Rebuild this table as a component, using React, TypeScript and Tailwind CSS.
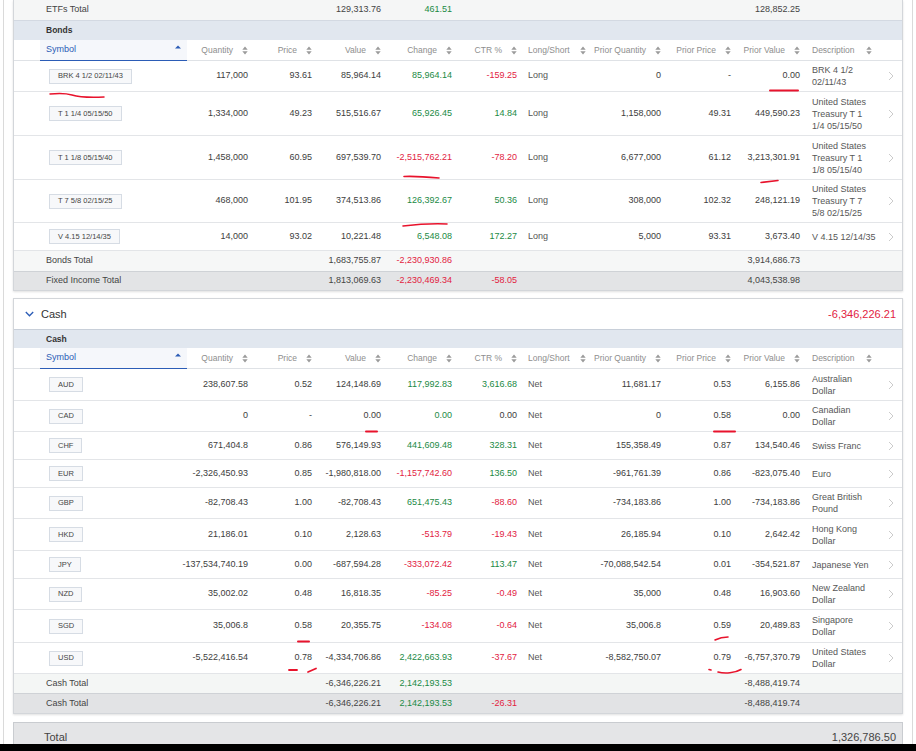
import React from "react";

type V = string | [string, "g" | "r"] | undefined;

const GRID =
  "grid grid-cols-[26px_147px_65px_64px_69px_71px_65px_70px_74px_70px_69px_76px_22px]";

type Row = {
  sym: string;
  q: V;
  p: V;
  v: V;
  c: V;
  ctr: V;
  ls: string;
  pq: V;
  pp: V;
  pv: V;
  desc: string[];
  h: string;
};

const bonds: Row[] = [
  { sym: "BRK 4 1/2 02/11/43", q: "117,000", p: "93.61", v: "85,964.14", c: ["85,964.14", "g"], ctr: ["-159.25", "r"], ls: "Long", pq: "0", pp: "-", pv: "0.00", desc: ["BRK 4 1/2", "02/11/43"], h: "h-[31px]" },
  { sym: "T 1 1/4 05/15/50", q: "1,334,000", p: "49.23", v: "515,516.67", c: ["65,926.45", "g"], ctr: ["14.84", "g"], ls: "Long", pq: "1,158,000", pp: "49.31", pv: "449,590.23", desc: ["United States", "Treasury T 1", "1/4 05/15/50"], h: "h-[44px]" },
  { sym: "T 1 1/8 05/15/40", q: "1,458,000", p: "60.95", v: "697,539.70", c: ["-2,515,762.21", "r"], ctr: ["-78.20", "r"], ls: "Long", pq: "6,677,000", pp: "61.12", pv: "3,213,301.91", desc: ["United States", "Treasury T 1", "1/8 05/15/40"], h: "h-[44px]" },
  { sym: "T 7 5/8 02/15/25", q: "468,000", p: "101.95", v: "374,513.86", c: ["126,392.67", "g"], ctr: ["50.36", "g"], ls: "Long", pq: "308,000", pp: "102.32", pv: "248,121.19", desc: ["United States", "Treasury T 7", "5/8 02/15/25"], h: "h-[43px]" },
  { sym: "V 4.15 12/14/35", q: "14,000", p: "93.02", v: "10,221.48", c: ["6,548.08", "g"], ctr: ["172.27", "g"], ls: "Long", pq: "5,000", pp: "93.31", pv: "3,673.40", desc: ["V 4.15 12/14/35"], h: "h-[28px]" },
];

const cash: Row[] = [
  { sym: "AUD", q: "238,607.58", p: "0.52", v: "124,148.69", c: ["117,992.83", "g"], ctr: ["3,616.68", "g"], ls: "Net", pq: "11,681.17", pp: "0.53", pv: "6,155.86", desc: ["Australian", "Dollar"], h: "h-[32px]" },
  { sym: "CAD", q: "0", p: "-", v: "0.00", c: ["0.00", "g"], ctr: "0.00", ls: "Net", pq: "0", pp: "0.58", pv: "0.00", desc: ["Canadian", "Dollar"], h: "h-[31px]" },
  { sym: "CHF", q: "671,404.8", p: "0.86", v: "576,149.93", c: ["441,609.48", "g"], ctr: ["328.31", "g"], ls: "Net", pq: "155,358.49", pp: "0.87", pv: "134,540.46", desc: ["Swiss Franc"], h: "h-[28px]" },
  { sym: "EUR", q: "-2,326,450.93", p: "0.85", v: "-1,980,818.00", c: ["-1,157,742.60", "r"], ctr: ["136.50", "g"], ls: "Net", pq: "-961,761.39", pp: "0.86", pv: "-823,075.40", desc: ["Euro"], h: "h-[28px]" },
  { sym: "GBP", q: "-82,708.43", p: "1.00", v: "-82,708.43", c: ["651,475.43", "g"], ctr: ["-88.60", "r"], ls: "Net", pq: "-734,183.86", pp: "1.00", pv: "-734,183.86", desc: ["Great British", "Pound"], h: "h-[31px]" },
  { sym: "HKD", q: "21,186.01", p: "0.10", v: "2,128.63", c: ["-513.79", "r"], ctr: ["-19.43", "r"], ls: "Net", pq: "26,185.94", pp: "0.10", pv: "2,642.42", desc: ["Hong Kong", "Dollar"], h: "h-[32px]" },
  { sym: "JPY", q: "-137,534,740.19", p: "0.00", v: "-687,594.28", c: ["-333,072.42", "r"], ctr: ["113.47", "g"], ls: "Net", pq: "-70,088,542.54", pp: "0.01", pv: "-354,521.87", desc: ["Japanese Yen"], h: "h-[28px]" },
  { sym: "NZD", q: "35,002.02", p: "0.48", v: "16,818.35", c: ["-85.25", "r"], ctr: ["-0.49", "r"], ls: "Net", pq: "35,000", pp: "0.48", pv: "16,903.60", desc: ["New Zealand", "Dollar"], h: "h-[31px]" },
  { sym: "SGD", q: "35,006.8", p: "0.58", v: "20,355.75", c: ["-134.08", "r"], ctr: ["-0.64", "r"], ls: "Net", pq: "35,006.8", pp: "0.59", pv: "20,489.83", desc: ["Singapore", "Dollar"], h: "h-[33px]" },
  { sym: "USD", q: "-5,522,416.54", p: "0.78", v: "-4,334,706.86", c: ["2,422,663.93", "g"], ctr: ["-37.67", "r"], ls: "Net", pq: "-8,582,750.07", pp: "0.79", pv: "-6,757,370.79", desc: ["United States", "Dollar"], h: "h-[31px]" },
];

function Num({ v }: { v: V }) {
  if (v === undefined) return <div />;
  const text = typeof v === "string" ? v : v[0];
  const tone = typeof v === "string" ? undefined : v[1];
  const color =
    tone === "g" ? "text-[#1b8a45]" : tone === "r" ? "text-[#e2223f]" : "";
  return (
    <div className={`flex justify-end whitespace-nowrap pr-1 ${color}`}>
      {text}
    </div>
  );
}

function Sort() {
  return (
    <svg width="6" height="9" viewBox="0 0 6 9" className="shrink-0">
      <path d="M0.3 3.8 L3 0.6 L5.7 3.8 Z" fill="#9b9b9b" />
      <path d="M0.3 5.2 L3 8.4 L5.7 5.2 Z" fill="#9b9b9b" />
    </svg>
  );
}

function Chevron() {
  return (
    <svg width="6" height="10" viewBox="0 0 6 10">
      <path d="M1 1 L5 5 L1 9" fill="none" stroke="#cbcbcb" strokeWidth="1" />
    </svg>
  );
}

function HeaderRow() {
  const n = (t: string) => (
    <div className="flex items-center justify-end gap-[9px] whitespace-nowrap pr-1">
      {t}
      <Sort />
    </div>
  );
  return (
    <div
      className={`${GRID} h-[21px] items-center border-b border-[#dfe2e6] bg-white text-[8.5px] text-[#8e8e8e]`}
    >
      <div />
      <div className="relative -mb-px flex h-[21px] items-center border-b border-[#2b5cb6] bg-[#f5f7fb] pl-[6px] text-[9px] text-[#2b5cb6]">
        Symbol
        <svg
          width="6"
          height="4"
          viewBox="0 0 6 4"
          className="absolute right-[6px] top-[5px]"
        >
          <path d="M0 3.6 L3 0.4 L6 3.6 Z" fill="#2b5cb6" />
        </svg>
      </div>
      {n("Quantity")}
      {n("Price")}
      {n("Value")}
      {n("Change")}
      {n("CTR %")}
      <div className="flex items-center gap-[10px] whitespace-nowrap pl-[7px]">
        Long/Short
        <Sort />
      </div>
      {n("Prior Quantity")}
      {n("Prior Price")}
      {n("Prior Value")}
      <div className="flex items-center gap-[11px] whitespace-nowrap pl-2">
        Description
        <Sort />
      </div>
      <div />
    </div>
  );
}

function DataRow({ r }: { r: Row }) {
  return (
    <div
      className={`${GRID} ${r.h} items-center border-b border-[#e3e5e8] bg-white text-[9px] text-[#3d3d3d]`}
    >
      <div />
      <div className="pl-[9px]">
        <span className="inline-flex h-[15px] items-center whitespace-nowrap border border-[#d6dce4] bg-[#f7f8fa] px-2 text-[7.5px] text-[#444]">
          {r.sym}
        </span>
      </div>
      <Num v={r.q} />
      <Num v={r.p} />
      <Num v={r.v} />
      <Num v={r.c} />
      <Num v={r.ctr} />
      <div className="pl-[7px] text-[#555]">{r.ls}</div>
      <Num v={r.pq} />
      <Num v={r.pp} />
      <Num v={r.pv} />
      <div className="whitespace-nowrap pl-2 leading-[12px] text-[#575757]">
        {r.desc.map((l, i) => (
          <div key={i}>{l}</div>
        ))}
      </div>
      <div className="flex justify-center">
        <Chevron />
      </div>
    </div>
  );
}

function TotalRow({
  label,
  v,
  c,
  ctr,
  pv,
  cls,
}: {
  label: string;
  v?: V;
  c?: V;
  ctr?: V;
  pv?: V;
  cls: string;
}) {
  return (
    <div className={`${GRID} ${cls} items-center text-[9px] text-[#444]`}>
      <div />
      <div className="whitespace-nowrap pl-[6px]">{label}</div>
      <div />
      <div />
      <Num v={v} />
      <Num v={c} />
      <Num v={ctr} />
      <div />
      <div />
      <div />
      <Num v={pv} />
      <div />
      <div />
    </div>
  );
}

function GroupHeader({ label, cls }: { label: string; cls: string }) {
  return (
    <div
      className={`flex items-center border-t bg-[#e1e7ef] pl-[32px] text-[8.5px] font-semibold text-[#333] ${cls}`}
    >
      {label}
    </div>
  );
}

export default function App() {
  return (
    <div className="relative h-[751px] w-[916px] overflow-hidden bg-white font-['Liberation_Sans',Arial,sans-serif]">
      <div className="ml-[3px] flex h-[744px] w-[910px] flex-col overflow-hidden border-x border-[#dadada] px-[9px]">
        {/* Fixed income panel (continued) */}
        <div className="border-x border-b border-[#d3d6da] bg-white shadow-[0_1px_2px_rgba(0,0,0,0.12)]">
          <TotalRow
            label="ETFs Total"
            v="129,313.76"
            c={["461.51", "g"]}
            pv="128,852.25"
            cls="h-[20px] bg-[#f5f6f6]"
          />
          <GroupHeader label="Bonds" cls="h-[20px] border-[#d3d9e2]" />
          <HeaderRow />
          {bonds.map((r) => (
            <DataRow key={r.sym} r={r} />
          ))}
          <TotalRow
            label="Bonds Total"
            v="1,683,755.87"
            c={["-2,230,930.86", "r"]}
            pv="3,914,686.73"
            cls="h-[20px] bg-[#f6f7f7]"
          />
          <TotalRow
            label="Fixed Income Total"
            v="1,813,069.63"
            c={["-2,230,469.34", "r"]}
            ctr={["-58.05", "r"]}
            pv="4,043,538.98"
            cls="h-[19px] border-t border-[#cfd2d6] bg-[#e3e4e6]"
          />
        </div>

        {/* Cash panel */}
        <div className="mt-[7px] border border-[#d3d6da] bg-white shadow-[0_1px_2px_rgba(0,0,0,0.12)]">
          <div className="flex h-[30px] items-center pl-[11px] pr-[6px]">
            <svg width="9" height="6" viewBox="0 0 9 6">
              <path
                d="M0.8 1 L4.5 4.8 L8.2 1"
                fill="none"
                stroke="#2b5cb6"
                strokeWidth="1.3"
              />
            </svg>
            <span className="ml-[7px] text-[11px] text-[#333]">Cash</span>
            <span className="ml-auto text-[11px] text-[#e2223f]">
              -6,346,226.21
            </span>
          </div>
          <GroupHeader label="Cash" cls="h-[19px] border-[#c8cfd9]" />
          <HeaderRow />
          {cash.map((r) => (
            <DataRow key={r.sym} r={r} />
          ))}
          <TotalRow
            label="Cash Total"
            v="-6,346,226.21"
            c={["2,142,193.53", "g"]}
            pv="-8,488,419.74"
            cls="h-[19px] bg-[#f4f6f5]"
          />
          <TotalRow
            label="Cash Total"
            v="-6,346,226.21"
            c={["2,142,193.53", "g"]}
            ctr={["-26.31", "r"]}
            pv="-8,488,419.74"
            cls="h-[20px] border-t border-[#cfd2d6] bg-[#e2e3e5]"
          />
        </div>

        {/* Grand total */}
        <div className="mt-[8px] flex h-[30px] shrink-0 items-start border-x border-t border-[#c9ccd0] bg-[#e4e5e7] pl-[30px] pr-[6px] pt-[6px] text-[11px] text-[#444]">
          <span>Total</span>
          <span className="ml-auto">1,326,786.50</span>
        </div>
      </div>
      <div className="h-[7px] bg-black" />

      {/* hand-drawn red annotations */}
      <svg
        className="pointer-events-none absolute left-0 top-0"
        width="916"
        height="751"
        viewBox="0 0 916 751"
        fill="none"
        stroke="#e8132c"
        strokeLinecap="round"
      >
        <path d="M50 94 C58 93.2 66 93.2 72 95 S84 98 104 97" strokeWidth="1.5" />
        <path d="M770 90.5 L798 90.5" strokeWidth="2" />
        <path d="M404 176.5 C415 176 428 177 439 178" strokeWidth="1.6" />
        <path d="M403 226 C420 224 435 223.5 447 224" strokeWidth="1.6" />
        <path d="M761 182.5 L778 180.5" strokeWidth="1.6" />
        <path d="M366 431.5 L377 431.5" strokeWidth="2" />
        <path d="M714 431.5 L735 431.5" strokeWidth="2" />
        <path d="M298 641.5 L309 641.5" strokeWidth="2" />
        <path d="M289 670 L297 670" strokeWidth="1.8" />
        <path d="M308 672 L316 668.5" strokeWidth="1.8" />
        <path d="M715 640 C719 638 724 637 728 637" strokeWidth="1.6" />
        <path d="M709 669.5 L711 670" strokeWidth="1.6" />
        <path d="M718 672 C725 674 735 673 741 669.5" strokeWidth="1.6" />
      </svg>
    </div>
  );
}
